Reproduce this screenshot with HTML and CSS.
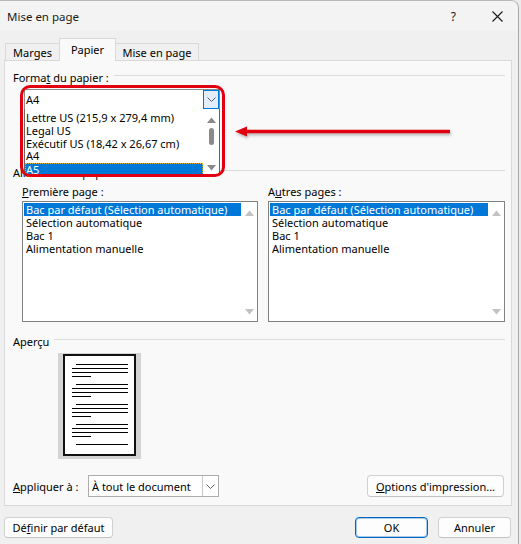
FILE: index.html
```html
<!DOCTYPE html>
<html lang="fr">
<head>
<meta charset="utf-8">
<title>Mise en page</title>
<link rel="stylesheet" href="styles.css">
</head>
<body>
<div class="dialog">
  <div class="titlebar">
    <span class="title">Mise en page</span>
    <span class="help">?</span>
    <svg class="close" width="11" height="11" viewBox="0 0 11 11"><path d="M0.5 0.5 L10.5 10.5 M10.5 0.5 L0.5 10.5" stroke="#1a1a1a" stroke-width="1.1" fill="none"/></svg>
  </div>
  <div class="tabs">
    <div class="tab tab-marges">Marges</div>
    <div class="tab tab-papier active">Papier</div>
    <div class="tab tab-mise">Mise en page</div>
  </div>
  <div class="panel">
    <div class="group-head head-format"><span class="group-label">Forma<u>t</u> du papier :</span><span class="group-line"></span></div>
    <div class="format">
      <div class="combo combo-format">
        <span class="combo-text">A4</span>
        <span class="combo-btn focused"><svg width="9" height="5" viewBox="0 0 9 5"><path d="M0.5 0.5 L4.5 4.5 L8.5 0.5" stroke="#606060" fill="none"/></svg></span>
      </div>
      <div class="dropdown">
        <ul class="dd-items">
          <li>Lettre US (215,9 x 279,4 mm)</li>
          <li>Legal US</li>
          <li>Exécutif US (18,42 x 26,67 cm)</li>
          <li>A4</li>
          <li class="sel">A5</li>
        </ul>
        <div class="dd-scroll">
          <svg class="dd-up" width="9" height="6" viewBox="0 0 9 6"><path d="M0 6 L4.5 0.5 L9 6 Z" fill="#8a8a8a"/></svg>
          <span class="dd-thumb"></span>
          <svg class="dd-down" width="9" height="6" viewBox="0 0 9 6"><path d="M0 0 L4.5 5.5 L9 0 Z" fill="#8a8a8a"/></svg>
        </div>
      </div>
      <div class="ring"></div>
    </div>
    <svg class="arrow" width="222" height="18" viewBox="0 0 222 18"><path d="M12 7.5 L217 7.5" stroke="#e0000f" stroke-width="3.5"/><path d="M2 7.5 L14 2.5 L14 12.5 Z" fill="#e0000f"/></svg>
    <div class="group-head head-alim"><span class="group-label">Alimentation papier</span><span class="group-line"></span></div>
    <div class="trays">
      <div class="tray tray-first">
        <div class="tray-label"><u>P</u>remière page :</div>
        <div class="listbox">
          <ul class="lb-items">
            <li class="sel">Bac par défaut (Sélection automatique)</li>
            <li>Sélection automatique</li>
            <li>Bac 1</li>
            <li>Alimentation manuelle</li>
          </ul>
          <div class="lb-scroll">
            <svg width="9" height="6" viewBox="0 0 9 6"><path d="M0 6 L4.5 0.5 L9 6 Z" fill="#c2c2c2"/></svg>
            <svg width="9" height="6" viewBox="0 0 9 6"><path d="M0 0 L4.5 5.5 L9 0 Z" fill="#c2c2c2"/></svg>
          </div>
        </div>
      </div>
      <div class="tray tray-other">
        <div class="tray-label">A<u>u</u>tres pages :</div>
        <div class="listbox">
          <ul class="lb-items">
            <li class="sel">Bac par défaut (Sélection automatique)</li>
            <li>Sélection automatique</li>
            <li>Bac 1</li>
            <li>Alimentation manuelle</li>
          </ul>
          <div class="lb-scroll">
            <svg width="9" height="6" viewBox="0 0 9 6"><path d="M0 6 L4.5 0.5 L9 6 Z" fill="#c2c2c2"/></svg>
            <svg width="9" height="6" viewBox="0 0 9 6"><path d="M0 0 L4.5 5.5 L9 0 Z" fill="#c2c2c2"/></svg>
          </div>
        </div>
      </div>
    </div>
    <div class="group-head head-preview"><span class="group-label">Aperçu</span><span class="group-line"></span></div>
    <div class="preview">
      <div class="page">
        <div class="para"><span class="pl indent"></span><span class="pl"></span><span class="pl"></span><span class="pl short"></span></div>
        <div class="para"><span class="pl indent"></span><span class="pl"></span><span class="pl"></span><span class="pl short"></span></div>
        <div class="para"><span class="pl indent"></span><span class="pl"></span><span class="pl"></span><span class="pl short"></span></div>
        <div class="para"><span class="pl indent"></span><span class="pl"></span><span class="pl"></span><span class="pl short"></span></div>
        <div class="para"><span class="pl indent"></span></div>
      </div>
    </div>
    <div class="apply-row">
      <span class="apply-label"><u>A</u>ppliquer à :</span>
      <div class="combo combo-apply">
        <span class="combo-text">À tout le document</span>
        <span class="combo-btn"><svg width="9" height="5" viewBox="0 0 9 5"><path d="M0.5 0.5 L4.5 4.5 L8.5 0.5" stroke="#606060" fill="none"/></svg></span>
      </div>
      <button class="btn btn-options"><u>O</u>ptions d'impression...</button>
    </div>
  </div>
  <div class="footer">
    <button class="btn btn-default">Dé<u>f</u>inir par défaut</button>
    <button class="btn btn-ok">OK</button>
    <button class="btn btn-cancel">Annuler</button>
  </div>
</div>
</body>
</html>
```

FILE: styles.css
```css
* { box-sizing: border-box; }
html, body { margin: 0; padding: 0; }
body {
  background: #ebebeb;
  font-family: "Noto Sans", "Open Sans", sans-serif;
  font-size: 11px;
  color: #000;
  width: 521px;
  height: 544px;
  overflow: hidden;
}
u { text-decoration: underline; text-underline-offset: 1px; text-decoration-thickness: 1px; }
ul { list-style: none; margin: 0; padding: 0; }

.dialog {
  width: 519px;
  height: 544px;
  background: #f0f0f0;
  border-top: 1px solid #b8b8b8;
  border-right: 1px solid #a8a8a8;
  border-top-right-radius: 8px;
  overflow: hidden;
}

.titlebar {
  height: 30px;
  background: #f3f3f3;
  display: flex;
  align-items: center;
  padding-left: 7px;
}
.title { font-size: 11.5px; color: #1a1a1a; }
.help { margin-left: auto; font-size: 12px; color: #1a1a1a; margin-right: 36px; }
.close { margin-right: 15px; }

.tabs {
  height: 29px;
  display: flex;
  align-items: flex-end;
  padding-left: 5px;
}
.tab {
  height: 17px;
  border: 1px solid #d9d9d9;
  border-bottom: none;
  background: #f0f0f0;
  display: flex;
  align-items: center;
  justify-content: center;
  padding-top: 1px;
}
.tab + .tab { margin-left: -1px; }
.tab-marges { width: 55px; }
.tab-papier { width: 57px; }
.tab-mise { width: 84px; }
.tab.active {
  height: 23px;
  margin-bottom: -1px;
  background: #f9f9f9;
  position: relative;
  z-index: 2;
  padding-top: 0;
  padding-bottom: 2px;
}

.panel {
  position: relative;
  margin-left: 4px;
  width: 508px;
  height: 446px;
  border: 1px solid #d9d9d9;
  background: #f9f9f9;
  padding: 8px 6px 0 8px;
  display: flex;
  flex-direction: column;
}

.group-head {
  height: 16px;
  display: flex;
  align-items: center;
}
.group-line {
  flex: 1;
  height: 1px;
  background: #dcdcdc;
  margin-left: 5px;
  margin-top: -3px;
}

.format {
  position: relative;
  margin-top: 4px;
  margin-left: 11px;
  width: 196px;
  z-index: 3;
}
.combo {
  height: 21px;
  background: #fff;
  border: 1px solid #8a8a8a;
  display: flex;
  align-items: center;
}
.combo-text { flex: 1; padding-left: 1px; }
.combo-btn {
  width: 16px;
  height: 19px;
  display: flex;
  align-items: center;
  justify-content: center;
}
.combo-btn.focused {
  background: #e3eefa;
  border: 1px solid #0078d7;
}

.dropdown {
  position: absolute;
  left: 0;
  top: 20px;
  width: 196px;
  height: 66px;
  background: #fff;
  border: 1px solid #646464;
  border-top: none;
  display: flex;
}
.dd-items { flex: 1; padding-top: 3px; }
.dd-items li {
  height: 12.75px;
  line-height: 12.75px;
  padding-left: 1px;
  white-space: nowrap;
}
.dd-items li.sel {
  background: #0078d7;
  color: #fff;
  outline: 1px dotted #e0b030;
  outline-offset: -1px;
  height: 14px;
  line-height: 13px;
}
.dd-scroll {
  width: 16px;
  display: flex;
  flex-direction: column;
  align-items: center;
  padding-top: 8px;
}
.dd-thumb {
  width: 5px;
  height: 17px;
  border-radius: 3px;
  background: #8a8a8a;
  margin-top: 5px;
}
.dd-down { margin-top: 20px; }

.ring {
  position: absolute;
  left: -4px;
  top: -4px;
  width: 205px;
  height: 92px;
  border: 3px solid #e0000f;
  border-radius: 10px;
  pointer-events: none;
}

.arrow {
  position: absolute;
  left: 228px;
  top: 63px;
  filter: drop-shadow(1px 2px 1.5px rgba(0,0,0,0.28));
}

.head-alim { margin-top: 54px; }

.trays {
  margin-top: 4px;
  margin-left: 9px;
  display: flex;
  gap: 10px;
}
.tray-first { width: 236px; }
.tray-other { width: 237px; }
.tray-label { height: 16px; line-height: 16px; margin-bottom: 1px; }
.listbox {
  height: 121px;
  background: #fff;
  border: 1px solid #828282;
  display: flex;
}
.lb-items { flex: 1; padding: 1px 0 0 1px; }
.lb-items li {
  height: 13px;
  line-height: 13px;
  padding-left: 2px;
  white-space: nowrap;
}
.lb-items li.sel { background: #0078d7; color: #fff; }
.lb-scroll {
  width: 16px;
  display: flex;
  flex-direction: column;
  align-items: center;
  justify-content: space-between;
  padding: 8px 0 6px;
}

.head-preview { margin-top: 11px; }
.preview {
  margin-top: 4px;
  margin-left: 45px;
  width: 83px;
  height: 106px;
  background: #d4d4d4;
  padding: 1px 0 0 5px;
}
.page {
  width: 73px;
  height: 102px;
  background: #fff;
  border: 2px solid #111;
  padding: 8px 0 0 7px;
  display: flex;
  flex-direction: column;
  gap: 7px;
}
.para { display: flex; flex-direction: column; gap: 3px; }
.pl { display: block; height: 1px; width: 56px; background: #000; }
.pl.indent { width: 52px; margin-left: 4px; }
.pl.short { width: 19px; }

.apply-row {
  margin-top: 16px;
  display: flex;
  align-items: center;
}
.apply-label { width: 75px; }
.combo-apply {
  width: 131px;
  height: 22px;
  border-color: #adadad;
}
.combo-apply .combo-text { padding-left: 3px; }
.combo-apply .combo-btn {
  height: 20px;
  border-left: 1px solid #c8c8c8;
}

.btn {
  font-family: inherit;
  font-size: 11px;
  color: #000;
  background: #fdfdfd;
  border: 1px solid #d0d0d0;
  border-bottom-color: #c2c2c2;
  border-radius: 4px;
  height: 21px;
  padding: 0;
  display: flex;
  align-items: center;
  justify-content: center;
}
.btn-options { margin-left: auto; margin-right: 1px; width: 137px; height: 22px; }

.footer {
  margin-top: 11px;
  display: flex;
  padding-left: 4px;
}
.btn-default { width: 109px; }
.btn-ok {
  margin-left: auto;
  width: 73px;
  border: 1px solid #0067c0;
  box-shadow: inset 0 0 0 1px rgba(0,103,192,0.35);
}
.btn-cancel { width: 73px; margin-left: 10px; margin-right: 7px; }
```
